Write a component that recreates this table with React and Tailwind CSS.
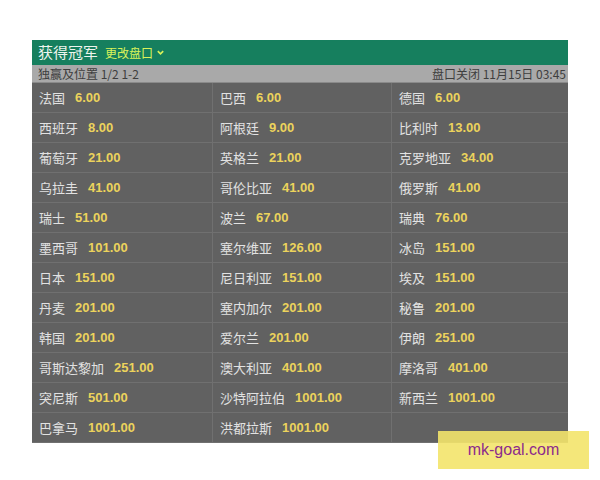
import React from 'react';

const rows = [
  [['法国', '6.00'], ['巴西', '6.00'], ['德国', '6.00']],
  [['西班牙', '8.00'], ['阿根廷', '9.00'], ['比利时', '13.00']],
  [['葡萄牙', '21.00'], ['英格兰', '21.00'], ['克罗地亚', '34.00']],
  [['乌拉圭', '41.00'], ['哥伦比亚', '41.00'], ['俄罗斯', '41.00']],
  [['瑞士', '51.00'], ['波兰', '67.00'], ['瑞典', '76.00']],
  [['墨西哥', '101.00'], ['塞尔维亚', '126.00'], ['冰岛', '151.00']],
  [['日本', '151.00'], ['尼日利亚', '151.00'], ['埃及', '151.00']],
  [['丹麦', '201.00'], ['塞内加尔', '201.00'], ['秘鲁', '201.00']],
  [['韩国', '201.00'], ['爱尔兰', '201.00'], ['伊朗', '251.00']],
  [['哥斯达黎加', '251.00'], ['澳大利亚', '401.00'], ['摩洛哥', '401.00']],
  [['突尼斯', '501.00'], ['沙特阿拉伯', '1001.00'], ['新西兰', '1001.00']],
  [['巴拿马', '1001.00'], ['洪都拉斯', '1001.00'], null],
];

const font = { fontFamily: '"Noto Sans CJK SC", "Liberation Sans", sans-serif' };

const Cell = ({ item, last }) => (
  <div className={`flex items-center h-[30px] pl-[7px] border-b border-[#707070] ${last ? '' : 'border-r'}`}>
    {item && (
      <>
        <span className="text-[13px] text-[#e2e2e2]">{item[0]}</span>
        <span className="ml-[10px] text-[13px] font-bold text-[#ecd35c] font-['Liberation_Sans',sans-serif]">{item[1]}</span>
      </>
    )}
  </div>
);

export default function App() {
  return (
    <div className="relative w-[600px] h-[480px] bg-white" style={font}>
      <div className="pt-[40px] pl-[32px]">
        <div className="w-[536px]">
          <div className="h-[25px] bg-[#167f5e] flex items-center pl-[6px] gap-[7px]">
            <span className="text-[15px] text-[#eef5ee]">获得冠军</span>
            <span className="flex items-center gap-[3px] text-[12px] text-[#d9f25a]">
              更改盘口
              <svg width="9" height="9" viewBox="0 0 10 10">
                <path d="M2 3.5 L5 6.5 L8 3.5" stroke="#d9f25a" strokeWidth="1.8" fill="none" />
              </svg>
            </span>
          </div>
          <div className="h-[18px] bg-[#a9a9a9] flex items-center justify-between pl-[6px] pr-[2px] text-[12px] text-[#3e3e3e] border-b border-[#8a8a8a]">
            <span>独赢及位置 1/2 1-2</span>
            <span>盘口关闭 11月15日 03:45</span>
          </div>
          <div className="grid grid-cols-[181px_179px_176px] bg-[#616161]">
            {rows.map((r, i) =>
              r.map((item, j) => <Cell key={`${i}-${j}`} item={item} last={j === 2} />)
            )}
          </div>
        </div>
      </div>
      <div className="absolute left-[438px] top-[431px] w-[151px] h-[38px] bg-[#f3e46c]/90 flex items-center justify-center">
        <span className="text-[16px] text-[#8c2b8c] font-['Liberation_Sans',sans-serif]">mk-goal.com</span>
      </div>
    </div>
  );
}
